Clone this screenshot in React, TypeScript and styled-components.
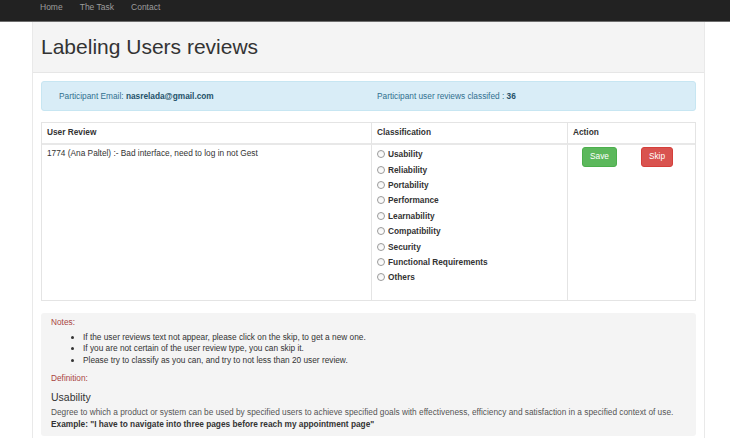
import React from "react";
import styled, { createGlobalStyle } from "styled-components";

const GlobalStyle = createGlobalStyle`
  html, body { margin: 0; padding: 0; background: #fff; }
  body {
    font-family: "Liberation Sans", Arial, sans-serif;
    font-size: 8.3px;
    color: #333;
  }
  * { box-sizing: border-box; }
`;

const Page = styled.div`
  width: 730px;
`;

const Navbar = styled.nav`
  height: 22px;
  background: #222;
  border-bottom: 1px solid #6d6d6d;
  display: flex;
  align-items: flex-start;
  padding: 2px 0 0 40px;
  gap: 17px;
`;

const NavLink = styled.a`
  color: #9d9d9d;
  font-size: 8.5px;
  line-height: 10px;
  text-decoration: none;
`;

const Container = styled.div`
  margin-left: 32px;
  width: 673px;
  border-left: 1px solid #e9e9e9;
  border-right: 1px solid #e9e9e9;
`;

const Header = styled.header`
  background: #f4f4f4;
  height: 51px;
  border-bottom: 1px solid #e6e6e6;
  padding-left: 8px;
  display: flex;
  align-items: center;
`;

const Title = styled.h1`
  margin: 0;
  font-size: 21px;
  font-weight: 400;
  color: #333;
`;

const Content = styled.main`
  padding: 8px 8px 5px 8px;
`;

const Alert = styled.div`
  height: 30px;
  background: #d9edf7;
  border: 1px solid #c7e6f2;
  border-radius: 3px;
  color: #31708f;
  display: grid;
  grid-template-columns: 318px 1fr;
  align-items: center;
  padding-left: 17px;
`;

const Strong = styled.b`
  color: #245269;
`;

const Table = styled.div`
  margin-top: 11px;
  border: 1px solid #e4e4e4;
  display: grid;
  grid-template-columns: 329px 196px 1fr;
`;

const HeadCell = styled.div<{ first?: boolean }>`
  height: 22px;
  border-bottom: 2px solid #e8e8e8;
  border-left: ${(p) => (p.first ? "none" : "1px solid #e4e4e4")};
  font-weight: 700;
  display: flex;
  align-items: center;
  padding-left: 5px;
  padding-bottom: 2px;
`;

const Cell = styled.div<{ first?: boolean }>`
  height: 155px;
  border-left: ${(p) => (p.first ? "none" : "1px solid #e4e4e4")};
  padding: 3px 5px;
  line-height: 11px;
`;

const RadioList = styled.div`
  display: flex;
  flex-direction: column;
  margin-top: -1px;
`;

const RadioRow = styled.label`
  height: 15.4px;
  display: flex;
  align-items: center;
  gap: 3px;
  font-weight: 700;
  color: #333;
`;

const RadioCircle = styled.span`
  width: 8px;
  height: 8px;
  border-radius: 50%;
  border: 1px solid #9a9a9a;
  background: linear-gradient(#f4f4f4, #ffffff);
  display: inline-block;
  margin-bottom: 1px;
`;

const Actions = styled.div`
  display: flex;
  gap: 24px;
  padding-left: 9px;
  margin-top: -1px;
`;

const Button = styled.button<{ variant: "save" | "skip" }>`
  font-family: inherit;
  font-size: 8.3px;
  color: #fff;
  height: 20px;
  width: ${(p) => (p.variant === "save" ? "35px" : "32px")};
  border-radius: 3px;
  border: 1px solid ${(p) => (p.variant === "save" ? "#4cae4c" : "#d43f3a")};
  background: ${(p) => (p.variant === "save" ? "#5cb85c" : "#d9534f")};
  padding: 0 0 2px 0;
`;

const Well = styled.section`
  margin-top: 12px;
  background: #f4f4f4;
  border-radius: 3px;
  padding: 4px 10px 6px 10px;
  color: #555;
  line-height: 11.5px;
`;

const Label = styled.div`
  color: #a94442;
`;

const NoteList = styled.ul`
  margin: 3px 0 7px 0;
  padding-left: 32px;
  color: #333;
`;

const Def = styled.h4`
  margin: 5px 0 2px 0;
  font-size: 10.5px;
  font-weight: 400;
  color: #333;
  line-height: 14px;
`;

const Description = styled.div`
  line-height: 12.5px;
`;

const Example = styled.div`
  font-weight: 700;
  color: #333;
  line-height: 12px;
`;

const categories = [
  "Usability",
  "Reliability",
  "Portability",
  "Performance",
  "Learnability",
  "Compatibility",
  "Security",
  "Functional Requirements",
  "Others",
];

export default function App() {
  return (
    <Page>
      <GlobalStyle />
      <Navbar>
        <NavLink href="#">Home</NavLink>
        <NavLink href="#">The Task</NavLink>
        <NavLink href="#">Contact</NavLink>
      </Navbar>
      <Container>
        <Header>
          <Title>Labeling Users reviews</Title>
        </Header>
        <Content>
          <Alert>
            <span>
              Participant Email: <Strong>nasrelada@gmail.com</Strong>
            </span>
            <span>
              Participant user reviews classifed : <Strong>36</Strong>
            </span>
          </Alert>
          <Table>
            <HeadCell first>User Review</HeadCell>
            <HeadCell>Classification</HeadCell>
            <HeadCell>Action</HeadCell>
            <Cell first>1774 (Ana Paltel) :- Bad interface, need to log in not Gest</Cell>
            <Cell>
              <RadioList>
                {categories.map((c) => (
                  <RadioRow key={c}>
                    <RadioCircle />
                    {c}
                  </RadioRow>
                ))}
              </RadioList>
            </Cell>
            <Cell>
              <Actions>
                <Button variant="save">Save</Button>
                <Button variant="skip">Skip</Button>
              </Actions>
            </Cell>
          </Table>
          <Well>
            <Label>Notes:</Label>
            <NoteList>
              <li>If the user reviews text not appear, please click on the skip, to get a new one.</li>
              <li>If you are not certain of the user review type, you can skip it.</li>
              <li>Please try to classify as you can, and try to not less than 20 user review.</li>
            </NoteList>
            <Label>Definition:</Label>
            <Def>Usability</Def>
            <Description>
              Degree to which a product or system can be used by specified users to achieve specified goals with effectiveness, efficiency and satisfaction in a specified context of use.
            </Description>
            <Example>Example: "I have to navigate into three pages before reach my appointment page"</Example>
          </Well>
        </Content>
      </Container>
    </Page>
  );
}
